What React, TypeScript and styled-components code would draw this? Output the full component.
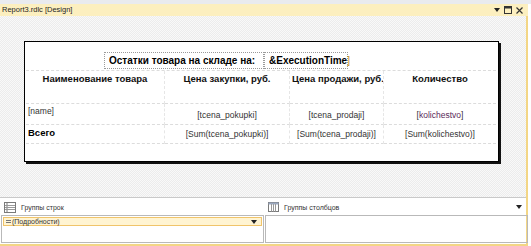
import React from "react";
import styled, { createGlobalStyle } from "styled-components";

const GlobalStyle = createGlobalStyle`
  html, body {
    margin: 0;
    padding: 0;
    overflow: hidden;
    background: #f4f4f4;
  }
  * {
    box-sizing: border-box;
  }
`;

const Window = styled.div`
  width: 531px;
  height: 246px;
  display: flex;
  flex-direction: column;
  font-family: "Liberation Sans", Arial, sans-serif;
  background: #fff;
`;

const TopStrip = styled.div`
  height: 4px;
  background: #e9ebef;
`;

const TitleBar = styled.div`
  height: 12px;
  display: flex;
  align-items: center;
  justify-content: space-between;
  padding: 0 5px 0 2px;
  background: #fcefbf;
  width: 528px;
`;

const Caption = styled.span`
  font-size: 7.5px;
  color: #1e1e1e;
  line-height: 12px;
`;

const Controls = styled.div`
  display: flex;
  align-items: center;
  gap: 4px;
`;

const Frame = styled.div`
  flex: 1;
  display: flex;
  flex-direction: column;
  width: 528px;
  border-right: 2px solid #f3d685;
  border-bottom: 2px solid #f3d685;
`;

const Surface = styled.div`
  height: 181px;
  padding: 25px 0 0 24px;
  background-color: #f3f3f3;
  background-image: repeating-conic-gradient(#ececec 0 25%, #f9f9f9 0 50%);
  background-size: 2px 2px;
`;

const ReportBody = styled.div`
  width: 475px;
  height: 121px;
  background: #fff;
  border: 1px solid #000;
  box-shadow: 2px 2px 0 #111;
  padding: 10px 0 0 1px;
  display: flex;
  flex-direction: column;
`;

const TitleRow = styled.div`
  display: flex;
  height: 18px;
  padding-left: 78px;
`;

const TextBox = styled.div<{ $w: number }>`
  width: ${(p) => p.$w}px;
  height: 17px;
  border: 1px dotted #9a9a9a;
  font-size: 10px;
  font-weight: bold;
  color: #000;
  display: flex;
  align-items: center;
  padding-left: 4px;
  white-space: nowrap;
`;

const Bracket = styled.span`
  color: #c08a20;
  font-weight: normal;
`;

const Table = styled.div`
  display: grid;
  grid-template-columns: 139px 125px 94px 112px;
  grid-template-rows: 33px 21px 19px;
  width: 470px;
  border-top: 1px dashed #dcdcdc;
`;

const Cell = styled.div<{ $align?: "left" | "center"; $bold?: boolean; $last?: boolean; $pad?: number }>`
  border-bottom: 1px dashed #dcdcdc;
  border-right: ${(p) => (p.$last ? "none" : "1px dashed #e6e6e6")};
  font-size: ${(p) => (p.$bold ? "9.5px" : "8.5px")};
  font-weight: ${(p) => (p.$bold ? "bold" : "normal")};
  color: ${(p) => (p.$bold ? "#000" : "#333")};
  text-align: ${(p) => p.$align || "center"};
  padding: ${(p) => p.$pad ?? 4}px 2px 0 2px;
  white-space: nowrap;
  overflow: hidden;
`;

const HeadCell = styled(Cell)`
  color: #111;
  padding-top: 2px;
`;

const Field = styled.span`
  color: #333;
`;

const Purple = styled.span`
  color: #5a2a5a;
`;

const Groups = styled.div`
  flex: 1;
  border-top: 1px solid #c9c9c9;
  display: grid;
  grid-template-columns: 263px 263px;
  grid-template-rows: 17px 1fr;
  column-gap: 1px;
  padding: 0 0 0 1px;
  background: #fff;
`;

const PaneHead = styled.div`
  display: flex;
  align-items: center;
  gap: 5px;
  padding-left: 3px;
  padding-top: 1px;
  font-size: 7px;
  color: #333;
`;

const PaneHeadRight = styled(PaneHead)`
  justify-content: space-between;
  padding-right: 6px;
`;

const PaneLabel = styled.div`
  display: flex;
  align-items: center;
  gap: 5px;
`;

const PaneBox = styled.div`
  border: 1px solid #b9b9b9;
  padding: 1px;
  margin-bottom: 1px;
`;

const GroupRow = styled.div`
  height: 9px;
  background: #fff4d2;
  border: 1px solid #f0c46a;
  display: flex;
  align-items: center;
  justify-content: space-between;
  padding: 0 4px 0 2px;
  font-size: 7px;
  color: #333;
`;

const GroupLabel = styled.span`
  display: flex;
  align-items: center;
  gap: 1px;
`;

const Arrow = () => (
  <svg width="6" height="4" viewBox="0 0 6 4">
    <path d="M0 0h6L3 4z" fill="#222" />
  </svg>
);

const RowsIcon = () => (
  <svg width="12" height="11" viewBox="0 0 12 11">
    <rect x="0.5" y="0.5" width="11" height="10" fill="#fff" stroke="#7a7a7a" />
    <line x1="3" y1="0.5" x2="3" y2="10.5" stroke="#7a7a7a" />
    <line x1="1" y1="3.5" x2="11" y2="3.5" stroke="#9a9a9a" />
    <line x1="1" y1="5.5" x2="11" y2="5.5" stroke="#9a9a9a" />
    <line x1="1" y1="7.5" x2="11" y2="7.5" stroke="#9a9a9a" />
  </svg>
);

const ColsIcon = () => (
  <svg width="11" height="10" viewBox="0 0 11 10">
    <rect x="0.5" y="0.5" width="10" height="9" fill="#fff" stroke="#7a7a7a" />
    <rect x="0.5" y="0.5" width="10" height="2" fill="#9aa8c0" />
    <line x1="3.5" y1="2" x2="3.5" y2="9.5" stroke="#9a9a9a" />
    <line x1="5.5" y1="2" x2="5.5" y2="9.5" stroke="#9a9a9a" />
    <line x1="7.5" y1="2" x2="7.5" y2="9.5" stroke="#9a9a9a" />
  </svg>
);

const DetailIcon = () => (
  <svg width="5" height="5" viewBox="0 0 5 5">
    <line x1="0" y1="1.5" x2="5" y2="1.5" stroke="#777" />
    <line x1="0" y1="3.5" x2="5" y2="3.5" stroke="#777" />
  </svg>
);

const WindowButtons = () => (
  <Controls>
    <Arrow />
    <svg width="8" height="8" viewBox="0 0 8 8">
      <rect x="0.5" y="0.5" width="7" height="7" fill="none" stroke="#333" />
      <rect x="0.5" y="0.5" width="7" height="2" fill="#333" />
    </svg>
    <svg width="7" height="7" viewBox="0 0 7 7">
      <path d="M0.5 0.5L6.5 6.5M6.5 0.5L0.5 6.5" stroke="#333" strokeWidth="1.2" />
    </svg>
  </Controls>
);

const App: React.FC = () => {
  return (
    <>
      <GlobalStyle />
      <Window>
        <TopStrip />
        <TitleBar>
          <Caption>Report3.rdlc [Design]</Caption>
          <WindowButtons />
        </TitleBar>
        <Frame>
          <Surface>
            <ReportBody>
              <TitleRow>
                <TextBox $w={160}>Остатки товара на складе на:</TextBox>
                <TextBox $w={84}>
                  &amp;ExecutionTime<Bracket>]</Bracket>
                </TextBox>
              </TitleRow>
              <Table>
                <HeadCell $bold>Наименование товара</HeadCell>
                <HeadCell $bold>Цена закупки, руб.</HeadCell>
                <HeadCell $bold>Цена продажи, руб.</HeadCell>
                <HeadCell $bold $last>Количество</HeadCell>

                <Cell $align="left" $pad={2}>
                  <Field>[name]</Field>
                </Cell>
                <Cell $pad={6}>
                  <Field>[tcena_pokupki]</Field>
                </Cell>
                <Cell $pad={6}>
                  <Field>[tcena_prodaji]</Field>
                </Cell>
                <Cell $pad={6} $last>
                  <Field>
                    [<Purple>kolichestvo</Purple>]
                  </Field>
                </Cell>

                <Cell $align="left" $bold $pad={2}>
                  Всего
                </Cell>
                <Cell $pad={4}>
                  <Field>[Sum(tcena_pokupki)]</Field>
                </Cell>
                <Cell $pad={4}>
                  <Field>[Sum(tcena_prodaji)]</Field>
                </Cell>
                <Cell $pad={4} $last>
                  <Field>[Sum(kolichestvo)]</Field>
                </Cell>
              </Table>
            </ReportBody>
          </Surface>
          <Groups>
            <PaneHead>
              <RowsIcon />
              Группы строк
            </PaneHead>
            <PaneHeadRight>
              <PaneLabel>
                <ColsIcon />
                Группы столбцов
              </PaneLabel>
              <Arrow />
            </PaneHeadRight>
            <PaneBox>
              <GroupRow>
                <GroupLabel>
                  <DetailIcon />
                  (Подробности)
                </GroupLabel>
                <Arrow />
              </GroupRow>
            </PaneBox>
            <PaneBox />
          </Groups>
        </Frame>
      </Window>
    </>
  );
};

export default App;
